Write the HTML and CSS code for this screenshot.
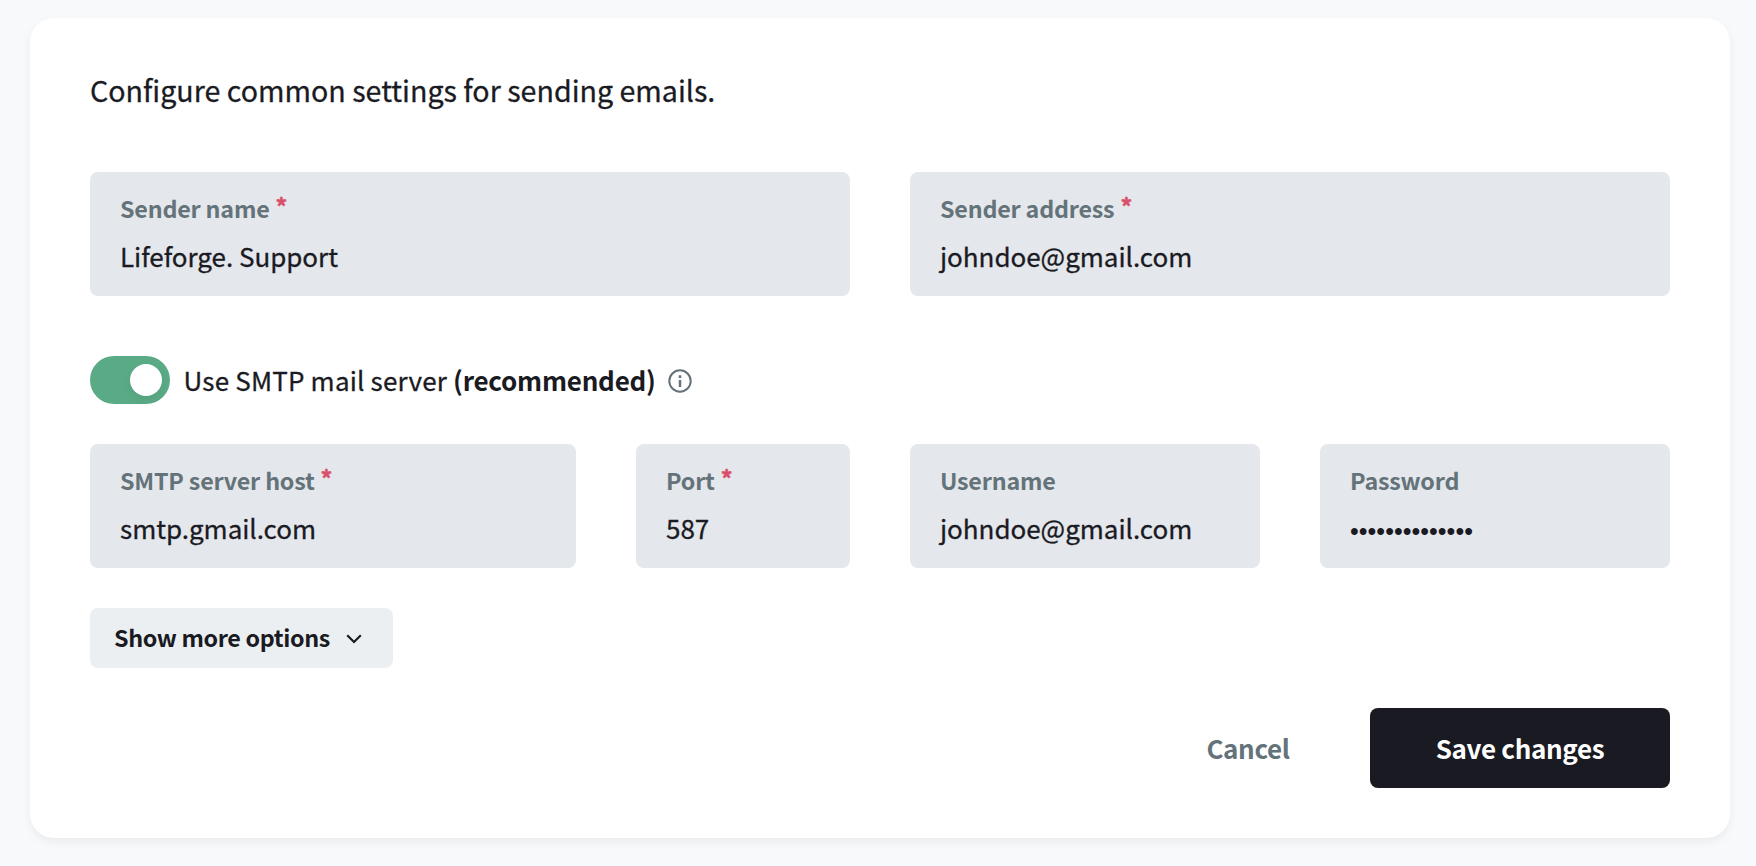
FILE: index.html
```html
<!DOCTYPE html>
<html lang="en">
<head>
<meta charset="utf-8">
<title>Mail settings</title>
<link rel="stylesheet" href="styles.css">
</head>
<body>
<main class="panel">
  <p class="intro">Configure common settings for sending emails.</p>

  <div class="row row-sender">
    <div class="field"><div class="label">Sender name<span class="req">*</span></div><div class="value">Lifeforge. Support</div></div>
    <div class="field"><div class="label">Sender address<span class="req">*</span></div><div class="value">johndoe@gmail.com</div></div>
  </div>

  <div class="smtp-toggle">
    <span class="switch"><span class="knob"></span></span>
    <span class="toggle-text">Use SMTP mail server <strong>(recommended)</strong></span>
    <svg class="info" viewBox="0 0 24 24" fill="none" stroke="currentColor" stroke-width="2"><circle cx="12" cy="12" r="10.7"/><path d="M12 11v7M12 6.300v2.600" stroke-width="2.5"/></svg>
  </div>

  <div class="row row-smtp">
    <div class="field"><div class="label">SMTP server host<span class="req">*</span></div><div class="value">smtp.gmail.com</div></div>
    <div class="field"><div class="label">Port<span class="req">*</span></div><div class="value">587</div></div>
    <div class="field"><div class="label">Username</div><div class="value">johndoe@gmail.com</div></div>
    <div class="field"><div class="label">Password</div><div class="value dots">••••••••••••••</div></div>
  </div>

  <button class="btn-more" type="button"><span>Show more options</span><svg class="chevron" viewBox="0 0 16 10" fill="none" stroke="currentColor" stroke-width="2.2"><path d="M1.200 1.200 8 8l6.800-6.800"/></svg></button>

  <div class="actions">
    <button class="btn-cancel" type="button">Cancel</button>
    <button class="btn-save" type="button">Save changes</button>
  </div>
</main>
</body>
</html>
```

FILE: styles.css
```css
* { box-sizing: border-box; }
body {
  margin: 0;
  height: 866px;
  padding: 18px 26px 28px 30px;
  background: #f8f9fb;
  color: #1a1a23;
  font-family: "Noto Sans CJK SC", "Noto Sans", sans-serif;
  overflow: hidden;
}
button { border: 0; padding: 0; font: inherit; color: inherit; letter-spacing: inherit; }
.panel {
  height: 820px;
  padding: 50px 60px;
  border-radius: 24px;
  background: #fff;
  box-shadow: 0 4px 10px rgba(0, 0, 0, .06);
}
.intro {
  margin: 0 0 60px;
  height: 44px;
  line-height: 44px;
  font-size: 28.6px;
  letter-spacing: .01px;
  -webkit-text-stroke: .3px;
}
.row { display: grid; gap: 60px; }
.row-sender { grid-template-columns: 760px 760px; }
.row-smtp { grid-template-columns: 486px 214px 350px 350px; }
.field {
  height: 124px;
  padding: 18px 30px 0;
  border-radius: 8px;
  background: #e4e7eb;
}
.label {
  display: flex;
  height: 36px;
  line-height: 36px;
  font-size: 23.3px;
  font-weight: 600;
  letter-spacing: -.2px;
  color: #64737a;
  white-space: nowrap;
}
.req { margin: -2px 0 0 6px; color: #d9506a; -webkit-text-stroke: .5px; }
.value {
  height: 36px;
  margin-top: 12px;
  line-height: 36px;
  font-size: 26px;
  letter-spacing: -.03px;
  white-space: nowrap;
  -webkit-text-stroke: .3px;
}
.dots {
  padding-top: 3px;
  font-family: "Liberation Sans", sans-serif;
  font-size: 25px;
  letter-spacing: .03px;
  -webkit-text-stroke: 0;
}
.smtp-toggle { display: flex; align-items: center; height: 48px; margin: 60px 0 40px; }
.switch {
  display: flex;
  justify-content: flex-end;
  align-items: center;
  width: 80px;
  height: 48px;
  padding: 8px;
  border-radius: 24px;
  background: #5aaa86;
}
.knob { width: 32px; height: 32px; border-radius: 50%; background: #fff; box-shadow: 0 4px 10px rgba(0, 0, 0, .06); }
.toggle-text {
  margin-left: 13.5px;
  font-size: 26px;
  line-height: 40px;
  letter-spacing: .18px;
  white-space: nowrap;
  -webkit-text-stroke: .3px;
}
.toggle-text strong { font-weight: 600; letter-spacing: -.22px; -webkit-text-stroke: 0; }
.info { width: 24px; height: 24px; margin: 2px 0 0 12.3px; color: #64737a; }
.btn-more {
  display: flex;
  align-items: center;
  width: 303px;
  height: 60px;
  margin-top: 40px;
  padding-left: 24px;
  border-radius: 8px;
  background: #ebeff2;
  font-size: 23.3px;
  font-weight: 600;
  letter-spacing: -.35px;
  white-space: nowrap;
}
.btn-more span { line-height: 36px; padding-bottom: 2px; }
.chevron { width: 16px; height: 10px; margin: 1px 0 0 16.5px; }
.actions {
  display: flex;
  justify-content: flex-end;
  margin-top: 40px;
  font-size: 26px;
  font-weight: 600;
  letter-spacing: -.35px;
}
.btn-cancel { width: 202px; height: 80px; margin-right: 21px; padding-bottom: 2px; background: none; color: #64737a; }
.btn-save { width: 300px; height: 80px; padding-bottom: 2px; border-radius: 8px; background: #1a1a23; color: #fff; }
```
